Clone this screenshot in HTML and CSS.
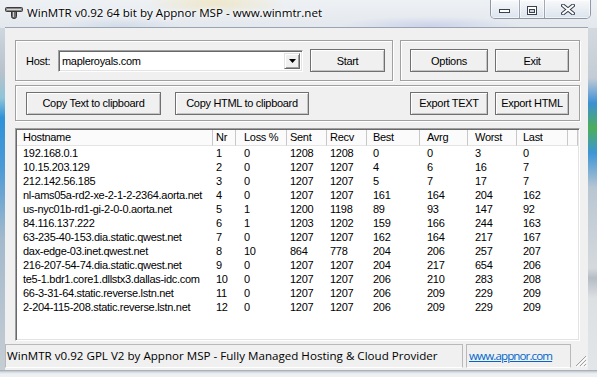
FILE: index.html
```html
<!DOCTYPE html>
<html lang="en">
<head>
  <meta charset="UTF-8">
  <meta name="viewport" content="width=device-width, initial-scale=1.0">
  <title>WinMTR</title>
  <link rel="stylesheet" href="styles.css">
</head>
<body>
  <div class="window">
    <!-- Title bar -->
    <div class="titlebar">
      <svg class="app-icon" width="18" height="13" viewBox="0 0 18 13">
        <rect x="0.5" y="1.5" width="17" height="4" rx="1" fill="#8a8a8a" stroke="#3c3c3c"/>
        <rect x="2" y="3" width="14" height="1" fill="#d6d6d6"/>
        <path d="M6.5 5.5 h5 v5 q0 2 -2.5 2 q-2.5 0 -2.5 -2 z" fill="#6e6e6e" stroke="#333"/>
        <rect x="8" y="6" width="1" height="5" fill="#cfcfcf"/>
      </svg>
      <span class="title">WinMTR v0.92 64 bit by Appnor MSP - www.winmtr.net</span>
      <div class="caption">
        <span class="cap cap-min">
          <svg width="12" height="5" viewBox="0 0 12 5"><rect x="0.5" y="0.5" width="10" height="3" fill="#fff" stroke="#3a4250"/></svg>
        </span>
        <span class="cap cap-max">
          <svg width="11" height="9" viewBox="0 0 11 9"><rect x="0.5" y="0.5" width="9" height="8" fill="#fff" stroke="#3a4250"/><rect x="2.5" y="3.5" width="5" height="3" fill="#c9d2de" stroke="#3a4250"/></svg>
        </span>
        <span class="cap cap-close">
          <svg width="14" height="11" viewBox="0 0 14 11"><path d="M2 1.5 L12 9.5 M12 1.5 L2 9.5" stroke="#3a4250" stroke-width="4" stroke-linecap="round"/><path d="M2 1.5 L12 9.5 M12 1.5 L2 9.5" stroke="#fff" stroke-width="2" stroke-linecap="round"/></svg>
        </span>
      </div>
    </div>

    <div class="edge-left"></div>

    <div class="client">
      <div class="controls">
        <div class="top-row">
          <div class="group host-group">
            <span class="host-label">Host:</span>
            <div class="combo">
              <span class="combo-text">mapleroyals.com</span>
              <span class="combo-btn">
                <svg width="7" height="4" viewBox="0 0 7 4"><path d="M0 0 H7 L3.5 4 Z" fill="#000"/></svg>
              </span>
            </div>
            <button class="btn btn-start">Start</button>
          </div>
          <div class="group action-group">
            <button class="btn btn-wide">Options</button>
            <button class="btn btn-narrow">Exit</button>
          </div>
        </div>

        <div class="group export-group">
          <button class="btn btn-copy">Copy Text to clipboard</button>
          <button class="btn btn-copy btn-copy-html">Copy HTML to clipboard</button>
          <span class="spacer"></span>
          <button class="btn btn-wide">Export TEXT</button>
          <button class="btn btn-narrow">Export HTML</button>
        </div>

        <div class="listview">
          <div class="row head">
            <span>Hostname</span><span>Nr</span><span>Loss %</span><span>Sent</span><span>Recv</span><span>Best</span><span>Avrg</span><span>Worst</span><span>Last</span><span></span>
          </div>
          <div class="row"><span>192.168.0.1</span><span>1</span><span>0</span><span>1208</span><span>1208</span><span>0</span><span>0</span><span>3</span><span>0</span></div>
          <div class="row"><span>10.15.203.129</span><span>2</span><span>0</span><span>1207</span><span>1207</span><span>4</span><span>6</span><span>16</span><span>7</span></div>
          <div class="row"><span>212.142.56.185</span><span>3</span><span>0</span><span>1207</span><span>1207</span><span>5</span><span>7</span><span>17</span><span>7</span></div>
          <div class="row"><span>nl-ams05a-rd2-xe-2-1-2-2364.aorta.net</span><span>4</span><span>0</span><span>1207</span><span>1207</span><span>161</span><span>164</span><span>204</span><span>162</span></div>
          <div class="row"><span>us-nyc01b-rd1-gi-2-0-0.aorta.net</span><span>5</span><span>1</span><span>1200</span><span>1198</span><span>89</span><span>93</span><span>147</span><span>92</span></div>
          <div class="row"><span>84.116.137.222</span><span>6</span><span>1</span><span>1203</span><span>1202</span><span>159</span><span>166</span><span>244</span><span>163</span></div>
          <div class="row"><span>63-235-40-153.dia.static.qwest.net</span><span>7</span><span>0</span><span>1207</span><span>1207</span><span>162</span><span>164</span><span>217</span><span>167</span></div>
          <div class="row"><span>dax-edge-03.inet.qwest.net</span><span>8</span><span>10</span><span>864</span><span>778</span><span>204</span><span>206</span><span>257</span><span>207</span></div>
          <div class="row"><span>216-207-54-74.dia.static.qwest.net</span><span>9</span><span>0</span><span>1207</span><span>1207</span><span>204</span><span>217</span><span>654</span><span>206</span></div>
          <div class="row"><span>te5-1.bdr1.core1.dllstx3.dallas-idc.com</span><span>10</span><span>0</span><span>1207</span><span>1207</span><span>206</span><span>210</span><span>283</span><span>208</span></div>
          <div class="row"><span>66-3-31-64.static.reverse.lstn.net</span><span>11</span><span>0</span><span>1207</span><span>1207</span><span>206</span><span>209</span><span>229</span><span>209</span></div>
          <div class="row"><span>2-204-115-208.static.reverse.lstn.net</span><span>12</span><span>0</span><span>1207</span><span>1207</span><span>206</span><span>209</span><span>229</span><span>209</span></div>
        </div>
      </div>

      <div class="statusbar">
        <span class="pane pane-main">WinMTR v0.92 GPL V2 by Appnor MSP - Fully Managed Hosting &amp; Cloud Provider</span>
        <span class="pane pane-link"><a href="#">www.appnor.com</a></span>
        <svg class="grip" width="12" height="12" viewBox="0 0 12 12">
          <path d="M11 1 L1 11 M11 5 L5 11 M11 9 L9 11" stroke="#a0a0a0" stroke-width="1"/>
          <path d="M12 2 L2 12 M12 6 L6 12 M12 10 L10 12" stroke="#fff" stroke-width="1"/>
        </svg>
      </div>
    </div>

    <div class="edge-right"></div>
    <div class="edge-bottom"></div>
  </div>
</body>
</html>
```

FILE: styles.css
```css
body {
  margin: 0;
  width: 597px;
  height: 377px;
  overflow: hidden;
  background-color: #f4f4f4;
  font-family: "Liberation Sans", Arial, sans-serif;
  font-size: 11px;
  letter-spacing: -0.3px;
  color: #000;
}

.window {
  display: grid;
  grid-template-columns: 5px 583px 9px;
  grid-template-rows: 28px 342px 7px;
  width: 597px;
  height: 377px;
}

/* glass frame */
.titlebar {
  grid-column: 1 / -1;
  display: flex;
  align-items: flex-start;
  background:
    radial-gradient(ellipse 70px 12px at 215px 3px, rgba(240, 222, 160, 0.5), transparent),
    radial-gradient(ellipse 90px 10px at 430px 26px, rgba(160, 170, 225, 0.35), transparent),
    radial-gradient(ellipse 60px 8px at 120px 26px, rgba(170, 190, 220, 0.3), transparent),
    linear-gradient(#eef1f4, #e3e8ee);
}

.app-icon {
  margin: 6px 0 0 5px;
}

.title {
  margin: 5px 0 0 4px;
  font-family: "Open Sans", "Noto Sans", sans-serif;
  font-size: 11.6px;
  letter-spacing: 0;
  line-height: 16px;
  text-shadow: 0 0 6px #fff, 0 0 3px #fff;
}

.caption {
  display: flex;
  margin-left: auto;
  margin-right: 6px;
  height: 18px;
  border: 1px solid rgba(70, 80, 100, 0.55);
  border-top: none;
  border-radius: 0 0 5px 5px;
  overflow: hidden;
}

.cap {
  display: flex;
  justify-content: center;
  align-items: flex-start;
  background: linear-gradient(rgba(255, 255, 255, 0.55), rgba(210, 220, 235, 0.5));
  box-shadow: inset 0 0 0 1px rgba(255, 255, 255, 0.55);
}

.cap + .cap {
  border-left: 1px solid rgba(70, 80, 100, 0.45);
}

.cap-min { width: 28px; padding-top: 9px; box-sizing: border-box; }
.cap-max { width: 25px; padding-top: 6px; box-sizing: border-box; }
.cap-close { width: 46px; padding-top: 4px; box-sizing: border-box; }

.edge-left {
  background: linear-gradient(#cfd7df 0, #b6c1cb 45px, #8fc4d8 70px, #2f92d8 90px, #4c9ad6 140px, #a3b9cc 210px, #c6cdd4 342px);
}

.edge-right {
  background: linear-gradient(#d3d9df 0, #c3ccd5 50px, #3d8fd4 75px, #4cae5a 100px, #3d95d6 125px, #b8c6d2 160px, #d5d9dd 240px, #b4bcc4 250px, #dde0e3 270px, #e3e6e9 342px);
}

.edge-bottom {
  grid-column: 1 / -1;
  background: linear-gradient(#9aa4ae 0, #d5dadf 2px, #eef0f2 4px);
}

/* client area */
.client {
  display: flex;
  flex-direction: column;
  background-color: #f0f0f0;
  box-shadow: 0 -1px 0 #9aa4b0, 1px 0 0 #9aa4b0;
}

.controls {
  display: flex;
  flex-direction: column;
  padding: 12px 8px 0 10px;
}

.top-row {
  display: flex;
}

.group {
  display: flex;
  align-items: center;
  box-sizing: border-box;
  border: 1px solid #a0a0a0;
  box-shadow: inset 1px 1px 0 #fff, 1px 1px 0 #fff;
}

.host-group {
  width: 378px;
  height: 41px;
  padding-left: 10px;
}

.host-label {
  width: 32px;
}

.combo {
  display: flex;
  width: 245px;
  height: 22px;
  box-sizing: border-box;
  padding: 2px;
  background-color: #fff;
  border: 1px solid;
  border-color: #a0a0a0 #fff #fff #a0a0a0;
  box-shadow: inset 1px 1px 0 #696969, inset -1px -1px 0 #e3e3e3;
}

.combo-text {
  flex: 1;
  padding-left: 1px;
  line-height: 16px;
}

.combo-btn {
  display: flex;
  align-items: center;
  justify-content: center;
  width: 16px;
  box-sizing: border-box;
  background-color: #f0f0f0;
  border: 1px solid;
  border-color: #e3e3e3 #696969 #696969 #e3e3e3;
  box-shadow: inset 1px 1px 0 #fff, inset -1px -1px 0 #a0a0a0;
}

.action-group {
  width: 180px;
  height: 41px;
  margin-left: 7px;
  padding-left: 9px;
  gap: 7px;
}

.export-group {
  width: 565px;
  height: 36px;
  margin-top: 4px;
  padding: 0 10px;
  gap: 7px;
}

.spacer {
  flex: 1;
}

.btn {
  height: 23px;
  box-sizing: border-box;
  padding: 0;
  border: 1px solid #707070;
  background-color: #f0f0f0;
  box-shadow: inset 1px 1px 0 #fff, inset -1px -1px 0 #c4c4c4;
  font: inherit;
  letter-spacing: inherit;
  color: #000;
}

.btn-start { width: 75px; margin-left: 7px; }
.btn-wide { width: 78px; }
.btn-narrow { width: 74px; }
.btn-copy { width: 135px; }
.btn-copy-html { width: 134px; margin-left: 7px; }

/* hop list */
.listview {
  width: 565px;
  height: 213px;
  margin-top: 7px;
  box-sizing: border-box;
  padding: 1px;
  overflow: hidden;
  background-color: #fff;
  border: 1px solid;
  border-color: #a0a0a0 #fff #fff #a0a0a0;
  box-shadow: inset 1px 1px 0 #696969, inset -1px -1px 0 #e3e3e3;
}

.row {
  display: grid;
  grid-template-columns: 196px 23px 51px 40px 40px 53px 48px 49px 51px 1fr;
  height: 14px;
  line-height: 14px;
}

.row > span {
  padding-left: 3px;
  white-space: nowrap;
  overflow: hidden;
}

.row > :nth-child(1) { padding-left: 6px; }
.row > :nth-child(3) { padding-left: 8px; }
.row > :nth-child(6),
.row > :nth-child(9) { padding-left: 6px; }
.row > :nth-child(7),
.row > :nth-child(8) { padding-left: 7px; }

.head {
  height: 16px;
  line-height: 15px;
  background-color: #fbfbfb;
}

.head > span {
  border-right: 1px solid #c8c8c8;
  border-bottom: 1px solid #e4e4e4;
}

/* status bar */
.statusbar {
  display: flex;
  align-items: stretch;
  height: 24px;
  margin-top: 3px;
}

.pane {
  box-sizing: border-box;
  border: 1px solid #b9b9b9;
  border-bottom-color: #fff;
  font-family: "Open Sans", "Noto Sans", sans-serif;
  font-size: 11.6px;
  letter-spacing: 0;
  line-height: 21px;
  white-space: nowrap;
  overflow: hidden;
}

.pane-main {
  width: 458px;
  padding-left: 1px;
}

.pane-link {
  width: 105px;
  margin-left: 3px;
  padding-left: 2px;
}

.pane-link a {
  color: #0066cc;
  letter-spacing: -0.9px;
}

.grip {
  align-self: flex-end;
  margin: 0 1px 1px auto;
}
```
